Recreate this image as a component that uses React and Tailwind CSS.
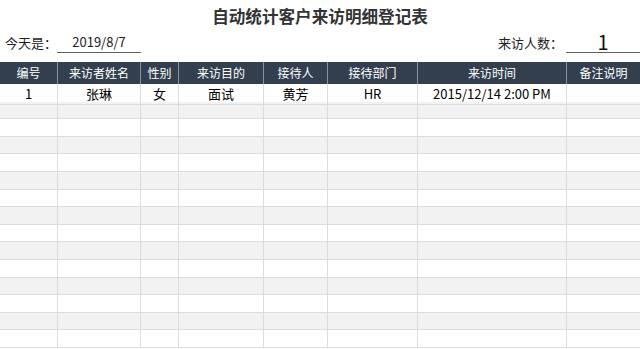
import React from "react";

const cols = ["编号", "来访者姓名", "性别", "来访目的", "接待人", "接待部门", "来访时间", "备注说明"];
const first = ["1", "张琳", "女", "面试", "黄芳", "HR", "2015/12/14 2:00 PM", ""];
const heights = ["h-[18px]", "h-[17px]", "h-[18px]", "h-[17px]", "h-[18px]", "h-[18px]", "h-[17px]", "h-[18px]", "h-[17px]", "h-[18px]", "h-[18px]", "h-[17px]", "h-[18px]", "h-[17px]", "h-[18px]"];
const gridCls = "grid grid-cols-[57px_83px_38px_85px_64px_90px_149px_74px]";

export default function App() {
  return (
    <div className="w-[640px] h-[349px] bg-white overflow-hidden font-['Microsoft_YaHei','Noto_Sans_CJK_SC',sans-serif] text-black">
      <div className="h-[32px] flex items-center justify-center text-[16.6px] font-bold text-[#333333] tracking-[0px]">
        自动统计客户来访明细登记表
      </div>
      <div className="h-[30px] pb-[9px] flex items-end">
        <span className="w-[57px] pl-[5px] text-[13px] leading-[20px] text-[#222]">今天是：</span>
        <div className="w-[84px] h-[21px] border-b border-[#606060] text-center text-[13px] leading-[20px] text-[#222]">2019/8/7</div>
        <div className="flex-1" />
        <span className="mr-[3px] text-[13px] leading-[20px] text-[#222]">来访人数：</span>
        <div className="w-[74px] h-[21px] border-b border-[#606060] text-center text-[20px] leading-[20px] text-[#111]">1</div>
      </div>
      <div className={`${gridCls} h-[22px] bg-[#333f4f] text-white text-[12px]`}>
        {cols.map((c, i) => (
          <div key={i} className={`flex items-center justify-center ${i > 0 ? "border-l border-[#8391a3]" : ""}`}>
            {c}
          </div>
        ))}
      </div>
      {heights.map((h, r) => (
        <div key={r} className={`${gridCls} ${h} ${r % 2 === 1 ? "bg-[#f2f2f2]" : "bg-white"} text-[13px]`}>
          {cols.map((_, i) => (
            <div key={i} className={`flex items-center justify-center border-b border-[#dcdcdc] ${i > 0 ? "border-l" : ""}`}>
              {r === 0 ? first[i] : ""}
            </div>
          ))}
        </div>
      ))}
    </div>
  );
}
